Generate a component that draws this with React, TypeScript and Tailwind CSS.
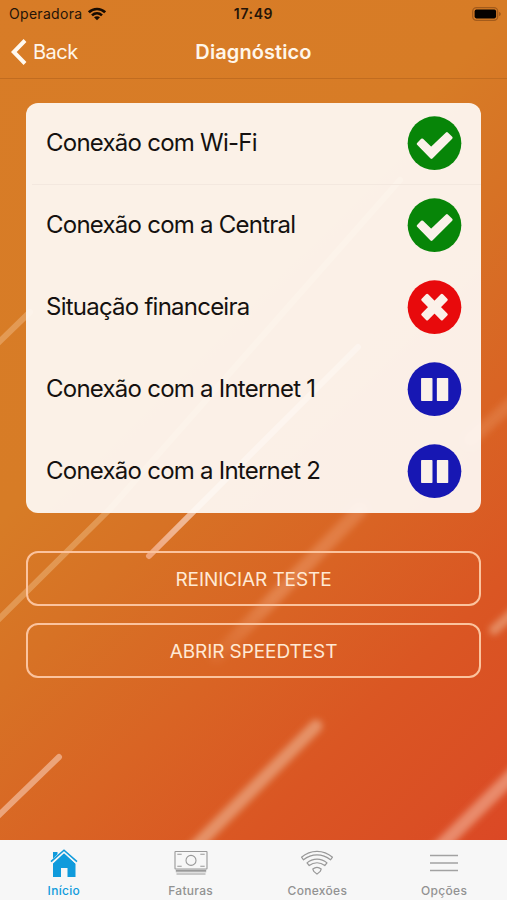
import React from 'react';

type Status = 'ok' | 'error' | 'paused';

const checks: { label: string; status: Status }[] = [
    { label: 'Conexão com Wi-Fi', status: 'ok' },
    { label: 'Conexão com a Central', status: 'ok' },
    { label: 'Situação financeira', status: 'error' },
    { label: 'Conexão com a Internet 1', status: 'paused' },
    { label: 'Conexão com a Internet 2', status: 'paused' },
];

const statusColor: Record<Status, string> = {
    ok: '#078508',
    error: '#e80a0c',
    paused: '#1717b3',
};

function StatusIcon({ status }: { status: Status }) {
    return (
        <svg viewBox="-2 -1 164 164" className="-mr-px h-[55px] w-[55px] shrink-0">
            <circle cx="80" cy="80" r="80" fill={statusColor[status]} />
            <g fill="#fbf1e9" stroke="#fbf1e9" strokeLinejoin="round">
                {status === 'ok' && (
                    <path strokeWidth="8" d="M31 82 43 70 70 96 117 51 130 64 71 123Z" />
                )}
                {status === 'error' && (
                    <path strokeWidth="9" d="M58 45 80 67 102 45 115 58 93 80 115 102 102 115 80 93 58 115 45 102 67 80 45 58Z" />
                )}
                {status === 'paused' && (
                    <path strokeWidth="4" d="M42 49H72V113H42ZM89 49H119V113H89Z" />
                )}
            </g>
        </svg>
    );
}

function Backdrop() {
    return (
        <svg viewBox="0 0 507 840" className="absolute inset-0 h-[840px] w-[507px]" fill="none" strokeLinecap="round">
            <defs>
                <filter id="soft" x="-20%" y="-20%" width="140%" height="140%">
                    <feGaussianBlur stdDeviation="3" />
                </filter>
                <linearGradient id="rise" gradientUnits="userSpaceOnUse" x1="149" y1="556" x2="358" y2="347">
                    <stop offset="0" stopColor="#f0a47a" />
                    <stop offset="0.4" stopColor="#fff" stopOpacity="0.5" />
                    <stop offset="1" stopColor="#fff" stopOpacity="0.4" />
                </linearGradient>
                <linearGradient id="fade" gradientUnits="userSpaceOnUse" x1="215" y1="658" x2="360" y2="510">
                    <stop offset="0" stopColor="#f5b38b" stopOpacity="0.08" />
                    <stop offset="0.4" stopColor="#f5b38b" stopOpacity="0.38" />
                    <stop offset="1" stopColor="#f5b38b" stopOpacity="0.3" />
                </linearGradient>
            </defs>
            <path d="M-4 345 30 312" stroke="#e39a54" strokeWidth="6" />
            <path d="M-4 622 110 509 400 180" stroke="#e6a362" strokeOpacity="0.75" strokeWidth="6" />
            <path d="M149 556 358 347" stroke="url(#rise)" strokeWidth="6" />
            <path d="M-4 818 59 757" stroke="#eca47a" strokeWidth="6" />
            <g filter="url(#soft)">
                <path d="M216 657 360 510" stroke="url(#fade)" strokeWidth="14" />
                <path d="M192 850 316 726" stroke="#e69267" strokeWidth="13" />
                <path d="M437 850 530 758" stroke="#e98b6c" strokeWidth="14" />
                <path d="M494 630 530 598" stroke="#e58a61" strokeWidth="10" />
                <path d="M470 440 530 387" stroke="#e58a51" strokeOpacity="0.5" strokeWidth="13" />
            </g>
        </svg>
    );
}

function HomeIcon() {
    return (
        <svg viewBox="0 0 28 28" className="h-7 w-7" fill="#109bdc">
            <path d="M3 3H7.5V7L3 11.3Z" />
            <path d="M14 4 25.5 14.5V28H17.5V19H11V28H3V14.5Z" />
            <path d="M1.2 13.4 14 1.7 26.8 13.4" fill="none" stroke="#f7f7f7" strokeWidth="3.4" />
            <path d="M1 12.6 14 1.2 27 12.6" fill="none" stroke="#109bdc" strokeWidth="1.6" />
        </svg>
    );
}

function MoneyIcon() {
    return (
        <svg viewBox="0 0 34 28" className="h-7 w-[34px]" fill="none" stroke="#999" strokeWidth="1.1">
            <rect x="1" y="2.5" width="32" height="17.5" rx="0.5" />
            <circle cx="17" cy="11.4" r="5" />
            <path d="M3.3 5.2H7.7M26.3 5.2H30.7M3.3 17.3H7.7M26.3 17.3H30.7" />
            <path d="M1.8 21.4H32.2M1.8 22.7H32.2M2.5 25H31.5" />
        </svg>
    );
}

function SignalIcon() {
    return (
        <svg viewBox="0 0 34 28" className="h-7 w-[34px]" fill="none" stroke="#999" strokeWidth="1.2" strokeLinejoin="round">
            <path d="M1.5 8.2C10.5.3 23.5.3 32.5 8.2L30.5 10.8C22.3 4.2 11.7 4.2 3.5 10.8Z" />
            <path d="M7 13.9C12.8 8.8 21.2 8.8 27 13.9L24.8 16.5C20.1 12.8 13.9 12.8 9.2 16.5Z" />
            <path d="M12.8 20C15.3 18 18.7 18 21.2 20L20.2 22.4 17 25.1 13.8 22.4Z" />
        </svg>
    );
}

function MenuIcon() {
    return (
        <svg viewBox="0 0 28 28" className="h-7 w-7" fill="none" stroke="#a2a2a2" strokeWidth="1.5">
            <path d="M0 6.4H28M0 14H28M0 21.6H28" />
        </svg>
    );
}

const tabs = [
    { label: 'Início', icon: <HomeIcon />, active: true },
    { label: 'Faturas', icon: <MoneyIcon />, active: false },
    { label: 'Conexões', icon: <SignalIcon />, active: false },
    { label: 'Opções', icon: <MenuIcon />, active: false },
];

export default function App() {
    return (
        <div className="relative flex h-[900px] w-[507px] flex-col overflow-hidden bg-[linear-gradient(135deg,#d87c27_0%,#d77c26_37%,#d77225_49%,#d96424_63%,#da5623_77%,#da4f24_88%,#dc4426_100%)] font-['Inter','Liberation_Sans',sans-serif]">
            <Backdrop />

            <div className="relative grid h-[27px] grid-cols-3 items-center px-[9px] text-[14px] text-[#241408]">
                <div className="flex items-center gap-[6px]">
                    <span className="tracking-[0.3px]">Operadora</span>
                    <svg viewBox="0 0 18 14" className="h-[14px] w-[18px]" fill="none" stroke="#160b02" strokeWidth="2.6">
                        <path d="M.9 5.3C5.5.8 12.5.8 17.1 5.3M4 8.4C6.9 5.7 11.1 5.7 14 8.4" />
                        <path d="M9 13.3 6 10.3C7.8 8.8 10.2 8.8 12 10.3Z" fill="#160b02" stroke="none" />
                    </svg>
                </div>
                <span className="text-center font-semibold tracking-[0.6px]">17:49</span>
                <svg viewBox="0 0 31 14" className="-mr-[5px] h-[14px] w-[31px] justify-self-end">
                    <rect x="0.7" y="0.7" width="25" height="12.6" rx="3.8" fill="none" stroke="#a35b1b" strokeWidth="1.3" />
                    <rect x="2.6" y="2.6" width="21.5" height="8.8" rx="1.8" fill="#050200" />
                    <path d="M27 5C29.4 5.4 29.4 8.6 27 9Z" fill="#a35b1b" />
                </svg>
            </div>

            <div className="relative grid h-[52px] grid-cols-3 items-center border-b border-[#c16c20] px-[11px] pb-px text-[20px] text-[#fff6ea]">
                <div className="flex items-center gap-[6px]">
                    <svg viewBox="0 0 16 26" className="h-[26px] w-4" fill="none" stroke="#fff9f0" strokeWidth="4">
                        <path d="M14 1.5 2.8 13 14 24.5" />
                    </svg>
                    <span className="tracking-[-0.5px]">Back</span>
                </div>
                <h1 className="text-center font-semibold tracking-[0.1px]">Diagnóstico</h1>
            </div>

            <main className="relative flex flex-1 flex-col px-[26px] pt-[24px]">
                <ul className="mb-[38px] h-[410px] rounded-xl bg-[#fefbf7]/92">
                    {checks.map((check, i) => (
                        <li key={check.label} className="flex h-[82px] flex-col pl-[6px]">
                            <div className="flex h-[81px] items-center justify-between pr-5 pl-[14px]">
                                <span className="pb-[2px] text-[24px] tracking-[-0.76px] text-[#15110f]">{check.label}</span>
                                <StatusIcon status={check.status} />
                            </div>
                            {i === 0 && <div className="h-px bg-[#f3e8df]" />}
                        </li>
                    ))}
                </ul>
                <div className="flex flex-col gap-[17px] text-[19px] text-[#ffe9d4]">
                    <button className="h-[55px] rounded-xl border-2 border-[#fbc39e] pt-[4px] tracking-[-0.08px]">REINICIAR TESTE</button>
                    <button className="h-[55px] rounded-xl border-2 border-[#fbc39e] pt-[4px] tracking-[-0.08px]">ABRIR SPEEDTEST</button>
                </div>
            </main>

            <nav className="relative grid h-[60px] grid-cols-4 bg-[#f7f7f7] pt-[9px]">
                {tabs.map((tab) => (
                    <div
                        key={tab.label}
                        className={`flex flex-col items-center pl-px text-[12px] leading-[28px] font-medium tracking-[0.3px] ${tab.active ? 'text-[#109bdc]' : 'text-[#929292]'}`}
                    >
                        {tab.icon}
                        <span>{tab.label}</span>
                    </div>
                ))}
            </nav>
        </div>
    );
}
